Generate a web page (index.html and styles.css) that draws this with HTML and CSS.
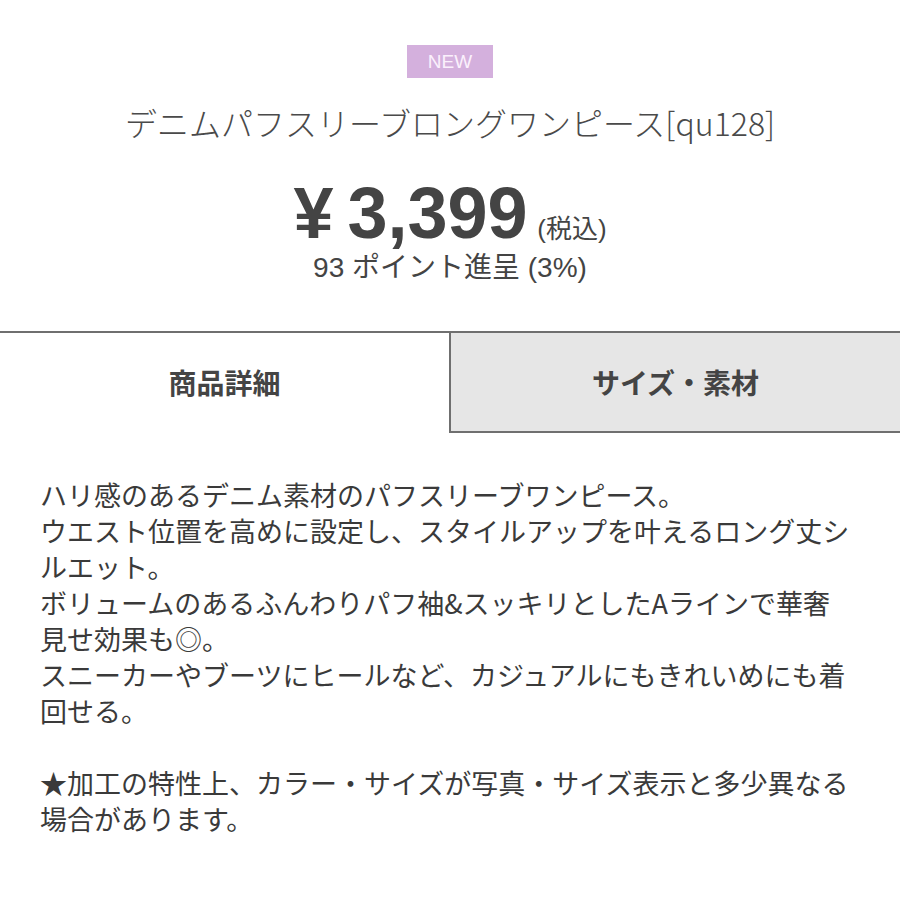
FILE: index.html
```html
<!DOCTYPE html>
<html lang="ja">
<head>
    <meta charset="UTF-8">
    <meta name="viewport" content="width=device-width, initial-scale=1.0">
    <title>デニムパフスリーブロングワンピース</title>
    <link rel="stylesheet" href="styles.css">
</head>
<body>
    <div class="product-head">
        <span class="new-badge">NEW</span>
        <h1 class="product-title">デニムパフスリーブロングワンピース[qu128]</h1>
        <div class="price-row">
            <span class="price"><span class="yen">¥</span>3,399</span>
            <span class="tax">(税込)</span>
        </div>
        <div class="points">93 ポイント進呈 (3%)</div>
    </div>

    <!-- Tabs -->
    <div class="tabs">
        <div class="tab active">商品詳細</div>
        <div class="tab">サイズ・素材</div>
    </div>

    <div class="description">
        ハリ感のあるデニム素材のパフスリーブワンピース。<br>
        ウエスト位置を高めに設定し、スタイルアップを叶えるロング丈シ<br>
        ルエット。<br>
        ボリュームのあるふんわりパフ袖&amp;スッキリとしたAラインで華奢<br>
        見せ効果も◎。<br>
        スニーカーやブーツにヒールなど、カジュアルにもきれいめにも着<br>
        回せる。<br>
        <br>
        ★加工の特性上、カラー・サイズが写真・サイズ表示と多少異なる<br>
        場合があります。
    </div>
</body>
</html>
```

FILE: styles.css
```css
body {
    margin: 0;
    background-color: #fff;
    color: #444;
    font-family: "Noto Sans CJK JP", "Liberation Sans", sans-serif;
}

.product-head {
    text-align: center;
    padding-top: 45px;
}

.new-badge {
    display: inline-block;
    width: 86px;
    height: 33px;
    line-height: 33px;
    background-color: #d4b0dd;
    color: #fbf0fc;
    font-family: "Liberation Sans", sans-serif;
    font-size: 19px;
    vertical-align: top;
}

.product-title {
    margin: 24px 0 0;
    font-size: 32px;
    line-height: 40px;
    font-weight: 300;
    color: #4a4a4a;
}

.price-row {
    margin-top: 36px;
    line-height: 70px;
    height: 70px;
}

.price {
    font-family: "Liberation Sans", sans-serif;
    font-size: 72px;
    font-weight: bold;
    color: #444;
}

.yen {
    margin-right: 14px;
}

.tax {
    font-family: "Liberation Sans", "Noto Sans CJK JP", sans-serif;
    font-size: 26px;
    margin-left: 6px;
    color: #444;
}

.points {
    margin-top: 4px;
    font-family: "Liberation Sans", "Noto Sans CJK JP", sans-serif;
    font-size: 28px;
    line-height: 32px;
    color: #444;
}

.tabs {
    display: flex;
    margin-top: 47px;
    border-top: 2px solid #6f6f6f;
}

.tab {
    flex: 1;
    height: 98px;
    display: flex;
    justify-content: center;
    align-items: center;
    font-size: 28px;
    font-weight: bold;
    color: #444;
}

.tab + .tab {
    background-color: #e6e6e6;
    border-left: 2px solid #6f6f6f;
    border-bottom: 2px solid #6f6f6f;
}

.description {
    padding: 44px 40px 0;
    font-size: 27px;
    line-height: 36px;
    color: #3a3a3a;
}
```
